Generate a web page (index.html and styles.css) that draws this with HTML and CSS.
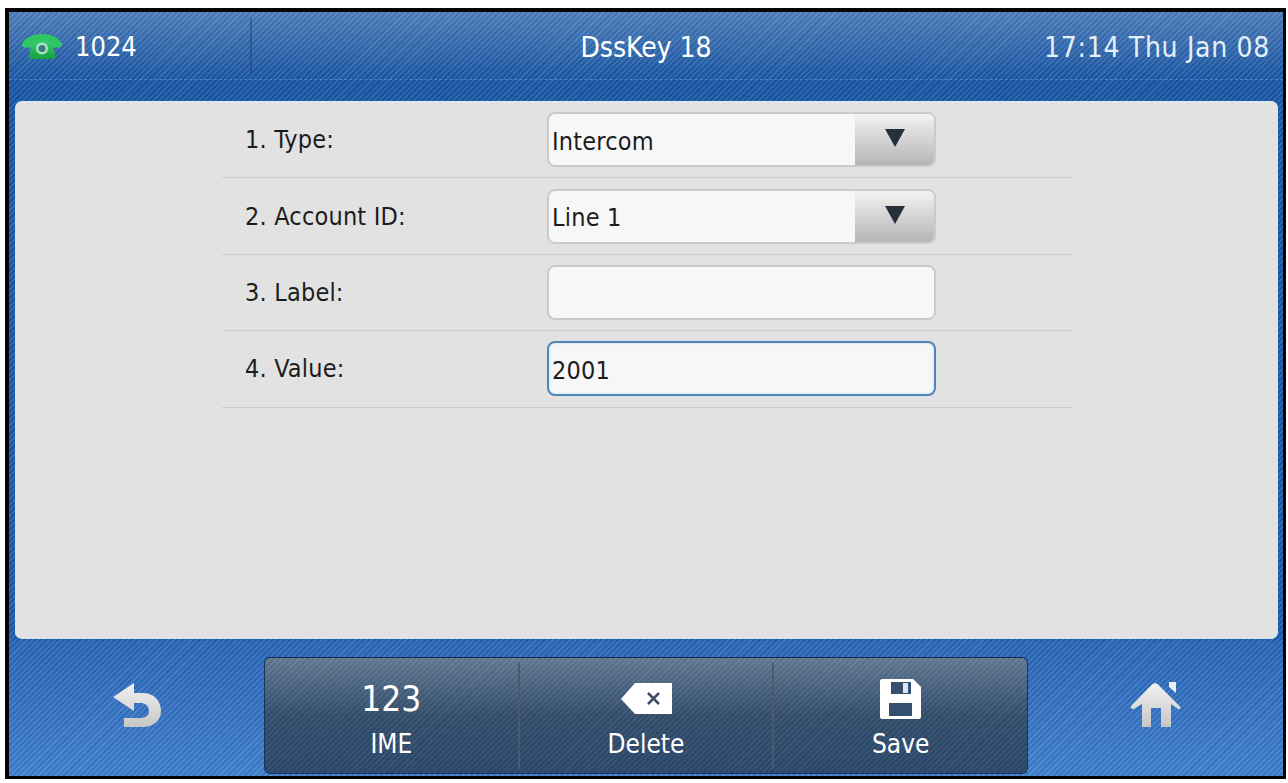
FILE: index.html
```html
<!DOCTYPE html>
<html lang="en">
<head>
  <meta charset="UTF-8">
  <title>DssKey 18</title>
  <link rel="stylesheet" href="styles.css">
</head>
<body>

  <div class="screen">
    <header class="topbar">
      <div class="status">
        <div class="account">
          <svg class="phone-icon" width="40" height="25" viewBox="0 0 40 25">
            <defs>
              <linearGradient id="phoneGreen" x1="0" y1="0" x2="0" y2="1">
                <stop offset="0" stop-color="#3cd072"/>
                <stop offset="1" stop-color="#14a03c"/>
              </linearGradient>
            </defs>
            <path d="M12 6h16l5 13v4c0 1-1 2-2 2H9c-1 0-2-1-2-2v-4z" fill="url(#phoneGreen)"/>
            <path d="M0 10C3 3 12 0 20 0s17 3 20 10c.5 2-1 3.500-3 3.500h-6c-2 0-2-2-2-5-3-1-6-1.500-9-1.500s-6 .5-9 1.500c0 3 0 5-2 5H3c-2 0-3.500-1.500-3-3.500z" fill="#2fc766"/>
            <circle cx="20" cy="14.500" r="6" fill="#a5e8bf"/>
            <circle cx="20" cy="14.500" r="3.600" fill="#3d7a88"/>
          </svg>
          <span>1024</span>
        </div>
        <div class="title">DssKey 18</div>
        <div class="clock">17:14 Thu Jan 08</div>
      </div>
    </header>

    <main class="panel">
      <div class="row">
        <label>1. Type:</label>
        <div class="field">
          <span class="value">Intercom</span>
          <span class="arrow-btn"><i class="arrow"></i></span>
        </div>
      </div>
      <div class="row">
        <label>2. Account ID:</label>
        <div class="field">
          <span class="value">Line 1</span>
          <span class="arrow-btn"><i class="arrow"></i></span>
        </div>
      </div>
      <div class="row">
        <label>3. Label:</label>
        <div class="field"></div>
      </div>
      <div class="row">
        <label>4. Value:</label>
        <div class="field active">
          <span class="value">2001</span>
        </div>
      </div>
    </main>

    <footer class="bottombar">
      <div class="side-btn">
        <svg width="48" height="44" viewBox="0 0 48 44">
          <defs>
            <linearGradient id="iconGrey" x1="0" y1="0" x2="0" y2="1">
              <stop offset="0" stop-color="#f2f2f2"/>
              <stop offset="1" stop-color="#c6c6c6"/>
            </linearGradient>
          </defs>
          <path d="M21 0L0 14l21 14v-8h7c5 0 8 4 8 8s-3 7-8 7H11v9h19c11 0 18-7 18-16 0-10-7-18-18-18h-9z" fill="url(#iconGrey)"/>
        </svg>
      </div>
      <div class="softkeys">
        <div class="softkey">
          <div class="key-top big">123</div>
          <span>IME</span>
        </div>
        <div class="softkey">
          <div class="key-top">
            <svg width="51" height="31" viewBox="0 0 51 31">
              <path d="M14 0h37v31H14L0 16z" fill="#fff"/>
              <path d="M27 10l11 11M38 10L27 21" stroke="#3c4f66" stroke-width="2.500"/>
            </svg>
          </div>
          <span>Delete</span>
        </div>
        <div class="softkey">
          <div class="key-top">
            <svg width="41" height="40" viewBox="0 0 41 40">
              <path d="M2 0h31l8 8v30c0 1-1 2-2 2H2c-1 0-2-1-2-2V2c0-1 1-2 2-2z" fill="#fff"/>
              <rect x="11" y="3" width="20" height="12" fill="#34506f"/>
              <rect x="23" y="4" width="5" height="10" fill="#dfe4ea"/>
              <rect x="9" y="24" width="23" height="13" fill="#34506f"/>
            </svg>
          </div>
          <span>Save</span>
        </div>
      </div>
      <div class="side-btn">
        <svg width="51" height="45" viewBox="0 0 51 45">
          <path d="M39 0h7v11l-7-6z" fill="#eeeeee"/>
          <path d="M25 1c1 0 2 .5 3 1.500l22 22c1 2 0 3-2 2.500l-7-5v23H31V26h-10v19H12V22l-8 5c-2 .5-4-1-3-3L22 2.500c1-1 2-1.500 3-1.500z" fill="url(#iconGrey)"/>
        </svg>
      </div>
    </footer>
  </div>

</body>
</html>
```

FILE: styles.css
```css
html, body {
  height: 100%;
}

body {
  margin: 0;
  background-color: white;
  font-family: "DejaVu Sans", sans-serif;
  font-stretch: condensed;
  overflow: hidden;
}

.screen {
  box-sizing: border-box;
  width: 1281px;
  height: 771px;
  margin: 8px 0 0 5px;
  border: solid #060606;
  border-width: 4px 3px 3px 4px;
  display: flex;
  flex-direction: column;
  color: white;
  background:
    repeating-linear-gradient(135deg, rgba(255,255,255,0.1) 0 1.5px, rgba(0,0,0,0.05) 1.5px 4px),
    linear-gradient(#4f80bb, #1a58a8 68px, #1a58a8 90px, #1e5cae 626px, #2a67ba 630px, #4080cf);
}

.topbar {
  height: 90px;
  flex: none;
}

.status {
  height: 68px;
  box-sizing: border-box;
  display: grid;
  grid-template-columns: 243px 1fr 243px;
  align-items: center;
  border-bottom: 1px dashed #4d82c4;
  font-size: 28px;
}

.account {
  height: 55px;
  box-sizing: border-box;
  padding: 2px 0 0 13px;
  display: flex;
  align-items: center;
  gap: 13px;
  font-size: 27px;
  border-right: 2px solid rgba(30,60,110,0.45);
}

.title {
  text-align: center;
  padding-top: 3px;
}

.clock {
  justify-self: end;
  white-space: nowrap;
  padding: 3px 13px 0 0;
  letter-spacing: 0.7px;
  color: #e4f0f8;
}

.panel {
  height: 536px;
  flex: none;
  box-sizing: border-box;
  margin: 0 5px 0 6px;
  padding-left: 207px;
  background-color: #e2e2e2;
  border-radius: 7px;
  box-shadow: 0 -1px 0 #d8eef8, 0 1px 0 #cde6f2;
}

.row {
  width: 850px;
  height: 76.4px;
  box-sizing: border-box;
  display: flex;
  align-items: center;
  padding-left: 23px;
  border-bottom: 1px solid #cdcdcd;
  font-size: 25px;
  letter-spacing: 0.2px;
  color: #1c1c1c;
}

.row label {
  width: 302px;
}

.field {
  width: 389px;
  height: 55px;
  box-sizing: border-box;
  display: flex;
  align-items: center;
  justify-content: space-between;
  background-color: #f7f7f7;
  border: 2px solid #cbcbcb;
  border-radius: 8px;
  overflow: hidden;
}

.field.active {
  border-color: #4f86b8;
  box-shadow: inset 0 0 3px #bfe0fa;
}

.value {
  padding: 3px 0 0 3px;
}

.arrow-btn {
  width: 79px;
  height: 100%;
  display: flex;
  justify-content: center;
  padding-top: 15px;
  box-sizing: border-box;
  background: linear-gradient(#f3f3f3, #b5b5b5);
}

.arrow {
  width: 0;
  height: 0;
  border-left: 10px solid transparent;
  border-right: 10px solid transparent;
  border-top: 18px solid #26303d;
}

.bottombar {
  height: 138px;
  flex: none;
  display: flex;
  align-items: flex-start;
}

.side-btn {
  flex: 1;
  height: 116px;
  margin-top: 19px;
  padding-bottom: 21px;
  box-sizing: border-box;
  display: flex;
  align-items: center;
  justify-content: center;
}

.softkeys {
  width: 764px;
  height: 117px;
  margin-top: 19px;
  flex: none;
  display: flex;
  align-items: center;
  box-sizing: border-box;
  border: 1px solid #16345f;
  border-top-color: #0e2a55;
  border-radius: 6px;
  overflow: hidden;
  background:
    repeating-linear-gradient(135deg, rgba(255,255,255,0.05) 0 1.5px, rgba(0,0,0,0.05) 1.5px 4px),
    linear-gradient(#647c96, #35506f 50%, #2c4a6e);
}

.softkey {
  flex: 1;
  height: 106px;
  box-sizing: border-box;
  padding-top: 13px;
  display: flex;
  flex-direction: column;
  align-items: center;
  gap: 7px;
  font-size: 26px;
  line-height: 30px;
  border-left: 2px solid #4a5a6c;
}

.softkey:first-child {
  border-left: none;
}

.key-top {
  height: 46px;
  display: flex;
  align-items: center;
}

.big {
  font-size: 35px;
}
```
